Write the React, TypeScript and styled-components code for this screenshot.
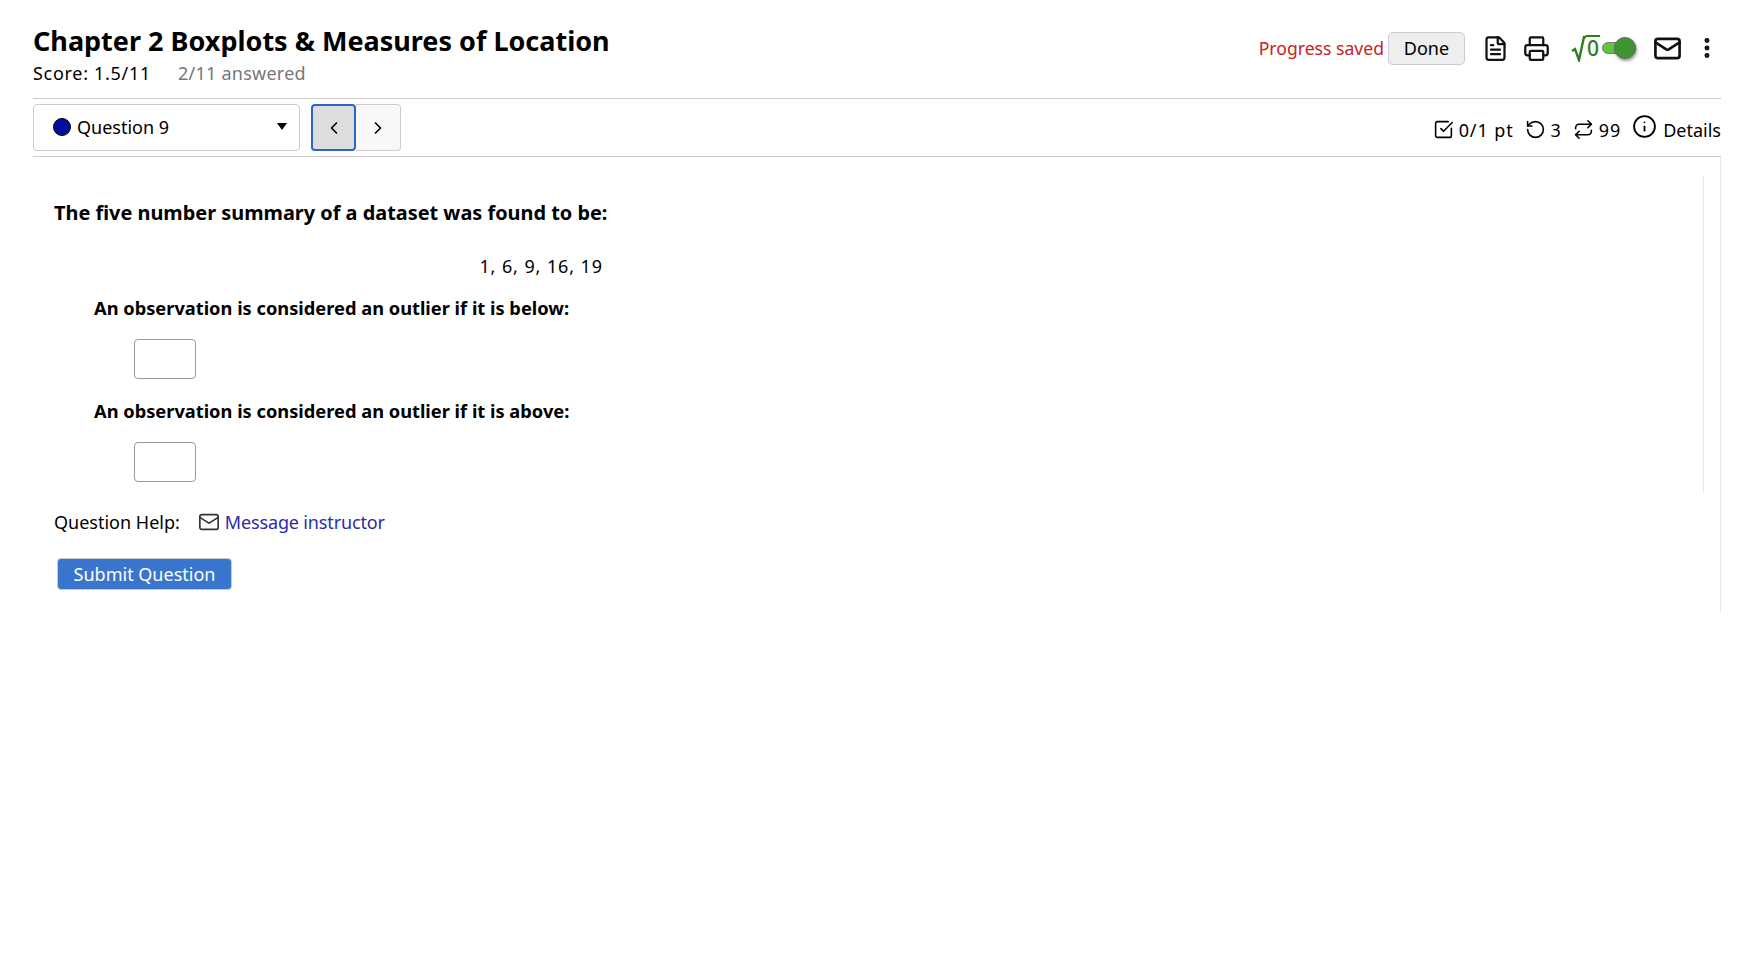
import React from "react";
import styled, { createGlobalStyle } from "styled-components";
import { ChevronLeft, ChevronRight, FileText, Printer, Mail, EllipsisVertical, SquareCheckBig, RotateCcw, Repeat, Info } from "lucide-react";

const GlobalStyle = createGlobalStyle`
  html, body {
    margin: 0;
    padding: 0;
    background: #fff;
    font-family: "Noto Sans", "Lato", sans-serif;
    color: #000;
  }
`;

const App = () => {
  return (
    <Page>
      <GlobalStyle />
      <Header>
        <div>
          <Title>Chapter 2 Boxplots &amp; Measures of Location</Title>
          <ScoreLine>
            <Score>Score: 1.5/11</Score>
            <Answered>2/11 answered</Answered>
          </ScoreLine>
        </div>
        <HeaderTools>
          <Saved>Progress saved</Saved>
          <DoneBtn>Done</DoneBtn>
          <ToolIcon><FileText size={27} strokeWidth={2} /></ToolIcon>
          <ToolIcon><Printer size={27} strokeWidth={2} /></ToolIcon>
          <MathToggle>
            <svg width="15" height="27" viewBox="0 0 15 27" fill="none" stroke="#2e7d1e" strokeWidth="2.4">
              <path d="M1 16 L4 14 L8 25 L13 2 L15 2" />
            </svg>
            <Zero>0</Zero>
            <Track><Knob /></Track>
          </MathToggle>
          <ToolIcon><Mail size={29} strokeWidth={2.2} /></ToolIcon>
          <DotsIcon><EllipsisVertical size={26} strokeWidth={2.6} /></DotsIcon>
        </HeaderTools>
      </Header>
      <NavBar>
        <NavLeft>
          <QuestionSelect>
            <Dot />
            <span>Question 9</span>
            <Caret />
          </QuestionSelect>
          <PagerBtn $active><ChevronLeft size={20} /></PagerBtn>
          <PagerBtn><ChevronRight size={20} /></PagerBtn>
        </NavLeft>
        <Meta>
          <MetaItem><SquareCheckBig size={21} strokeWidth={1.8} /><MetaNum>0/1 pt</MetaNum></MetaItem>
          <MetaItem><RotateCcw size={21} strokeWidth={1.8} /><MetaNum>3</MetaNum></MetaItem>
          <MetaItem><Repeat size={21} strokeWidth={1.8} /><MetaNum>99</MetaNum></MetaItem>
          <MetaItem><InfoIcon><Info size={25} strokeWidth={1.8} /></InfoIcon>Details</MetaItem>
        </Meta>
      </NavBar>
      <Content>
        <Lead>The five number summary of a dataset was found to be:</Lead>
        <Numbers>1, 6, 9, 16, 19</Numbers>
        <Prompt>An observation is considered an outlier if it is below:</Prompt>
        <Answer />
        <Prompt>An observation is considered an outlier if it is above:</Prompt>
        <Answer />
        <Help>
          <span>Question Help:</span>
          <HelpLink><Mail size={22} strokeWidth={1.8} color="#333" /><a>Message instructor</a></HelpLink>
        </Help>
        <SubmitBtn>Submit Question</SubmitBtn>
      </Content>
    </Page>
  );
};
export default App;

// styled-components -----------------
const Page = styled.div`
  min-height: 956px;
  margin: 0 21px 0 33px;
  box-sizing: border-box;
  position: relative;
  &::after {
    content: "";
    position: absolute;
    right: 0;
    top: 157px;
    height: 455px;
    border-right: 1px solid #e8e8e8;
  }
`;

const Header = styled.div`
  height: 99px;
  display: flex;
  justify-content: space-between;
  padding-top: 22px;
  box-sizing: border-box;
  border-bottom: 1px solid #ccc;
`;

const Title = styled.h1`
  margin: 0;
  font-size: 27px;
  line-height: 37px;
  font-weight: 700;
  white-space: nowrap;
`;

const ScoreLine = styled.div`
  margin-top: 2px;
  font-size: 18px;
  line-height: 24px;
  display: flex;
  gap: 27px;
`;

const Score = styled.span`
  letter-spacing: 0.7px;
`;

const Answered = styled.span`
  color: #777;
  letter-spacing: 0.25px;
`;

const HeaderTools = styled.div`
  display: flex;
  align-items: center;
  height: 52px;
`;

const Saved = styled.span`
  color: #c9211e;
  font-size: 17.6px;
  margin-right: 4px;
`;

const DoneBtn = styled.button`
  width: 77px;
  height: 33px;
  background: #eee;
  border: 1px solid #ccc;
  border-radius: 5px;
  font-family: inherit;
  font-size: 18px;
  color: #000;
  margin-right: 10px;
`;

const ToolIcon = styled.span`
  display: flex;
  margin: 0 7px;
  color: #111;
`;

const DotsIcon = styled.span`
  display: flex;
  margin: 0 1px 0 5px;
  color: #111;
`;

const MathToggle = styled.div`
  display: flex;
  align-items: center;
  margin: 0 10px 0 14px;
`;

const Zero = styled.span`
  color: #2e7d1e;
  font-size: 21px;
  font-weight: 500;
  line-height: 22px;
  height: 22px;
  padding: 0 1px;
  border-top: 2px solid #2e7d1e;
  margin-top: -3px;
`;

const Track = styled.div`
  position: relative;
  width: 34px;
  height: 12px;
  margin-left: 2px;
  border: 1px solid #777;
  box-sizing: border-box;
  border-radius: 6px;
  background: #5fc63f;
`;

const Knob = styled.div`
  position: absolute;
  right: -1px;
  top: -6px;
  width: 22px;
  height: 22px;
  box-sizing: border-box;
  border: 1px solid #666;
  border-radius: 50%;
  background: #3d9530;
  box-shadow: 1px 2px 3px rgba(0, 0, 0, 0.4);
`;

const NavBar = styled.div`
  height: 58px;
  display: flex;
  justify-content: space-between;
  align-items: center;
  border-bottom: 1px solid #ccc;
  box-sizing: border-box;
`;

const NavLeft = styled.div`
  display: flex;
  align-items: center;
`;

const QuestionSelect = styled.div`
  width: 267px;
  height: 47px;
  box-sizing: border-box;
  border: 1px solid #ccc;
  border-radius: 4px;
  display: flex;
  align-items: center;
  padding: 0 12px 2px 19px;
  font-size: 18px;
  margin-right: 11px;
`;

const Dot = styled.span`
  width: 16px;
  height: 16px;
  border-radius: 50%;
  background: #00109c;
  border: 1px solid #000;
  margin-right: 6px;
`;

const Caret = styled.span`
  margin-left: auto;
  width: 0;
  height: 0;
  border-left: 5.5px solid transparent;
  border-right: 5.5px solid transparent;
  border-top: 7px solid #000;
`;

const PagerBtn = styled.div<{ $active?: boolean }>`
  width: 45px;
  height: 47px;
  box-sizing: border-box;
  display: flex;
  align-items: center;
  justify-content: center;
  background: ${(p) => (p.$active ? "#ddd" : "#f8f8f8")};
  border: ${(p) => (p.$active ? "2px solid #2a66c4" : "1px solid #ccc")};
  border-left-width: ${(p) => (p.$active ? "2px" : "0")};
  border-radius: ${(p) => (p.$active ? "4px" : "0 4px 4px 0")};
`;

const Meta = styled.div`
  display: flex;
  align-items: center;
  gap: 11px;
  font-size: 18px;
  padding-top: 4px;
`;

const MetaItem = styled.span`
  display: flex;
  align-items: center;
  gap: 5px;
`;

const MetaNum = styled.span`
  letter-spacing: 0.9px;
`;

const InfoIcon = styled.span`
  display: flex;
  margin-top: -6px;
  margin-right: 1px;
`;

const Content = styled.div`
  position: relative;
  padding: 42px 0 0 21px;
  height: 455px;
  box-sizing: border-box;
  margin-right: 17px;
  &::after {
    content: "";
    position: absolute;
    right: 0;
    top: 20px;
    height: 316px;
    border-right: 1px solid #e8e8e8;
  }
`;

const Lead = styled.div`
  font-size: 19.9px;
  line-height: 28px;
  font-weight: 700;
`;

const Numbers = styled.div`
  width: 549px;
  text-align: right;
  margin-top: 29px;
  font-size: 18px;
  line-height: 20px;
  letter-spacing: 0.9px;
`;

const Prompt = styled.div`
  margin: 20px 0 0 40px;
  font-size: 18.25px;
  line-height: 24px;
  font-weight: 700;
`;

const Answer = styled.input`
  display: block;
  width: 62px;
  height: 40px;
  box-sizing: border-box;
  margin: 19px 0 0 80px;
  border: 1px solid #999;
  border-radius: 4px;
  background: #fff;
`;

const Help = styled.div`
  margin-top: 27px;
  font-size: 18px;
  line-height: 26px;
  display: flex;
  align-items: center;
  gap: 18px;
`;

const HelpLink = styled.span`
  display: flex;
  align-items: center;
  gap: 5px;
  color: #2b2ba8;
  letter-spacing: -0.15px;
`;

const SubmitBtn = styled.button`
  display: block;
  width: 175px;
  height: 32px;
  margin: 23px 0 0 3px;
  border: 1px solid #ccc;
  border-radius: 4px;
  background: #3a75cd;
  color: #fff;
  font-family: inherit;
  font-size: 18px;
`;
